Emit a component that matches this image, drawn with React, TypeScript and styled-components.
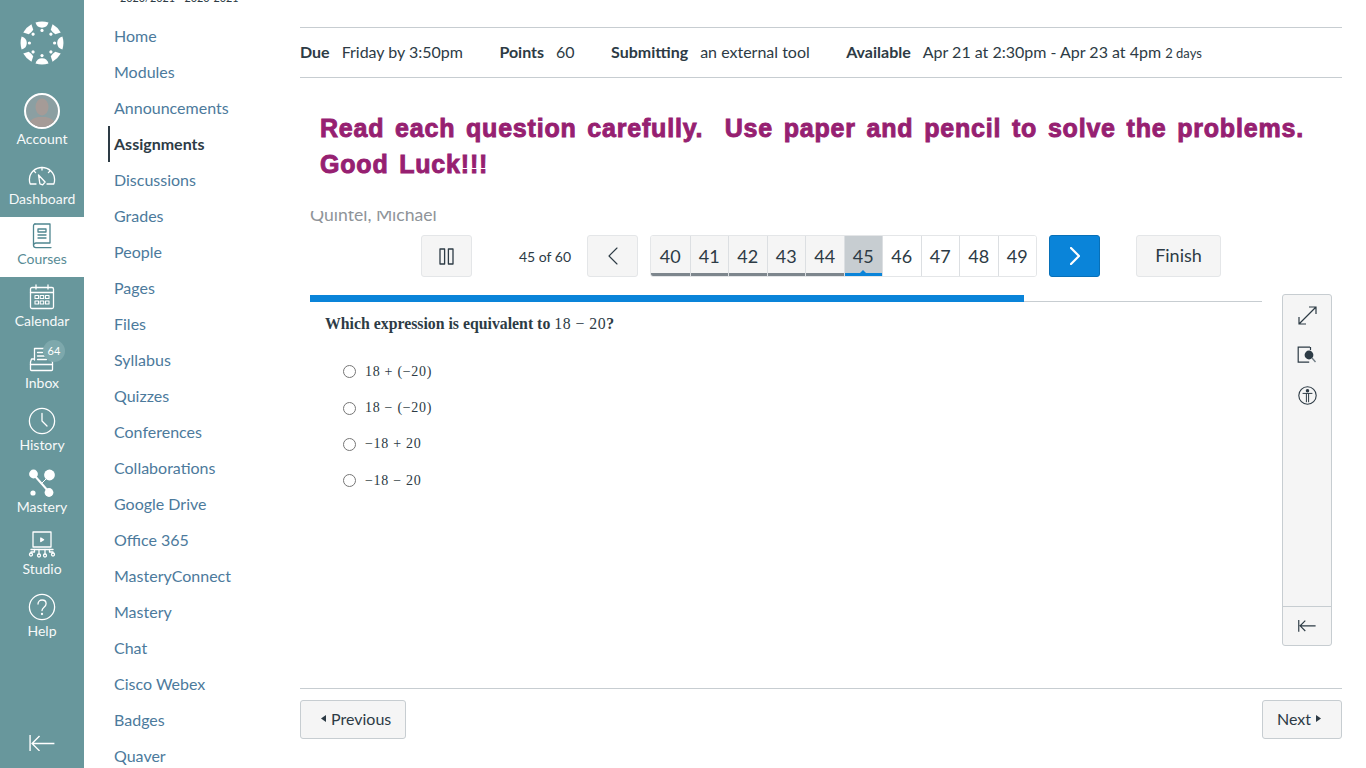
import React from 'react'
import styled, { createGlobalStyle } from 'styled-components'

const GlobalStyle = createGlobalStyle`
  html, body {
    margin: 0;
    height: 100%;
    overflow: hidden;
    background: #fff;
    font-family: Lato, "Liberation Sans", sans-serif;
    color: #2d3b45;
  }
  * {
    box-sizing: border-box;
  }
`

const Page = styled.div`
  display: flex;
  width: 1366px;
  height: 768px;
  overflow: hidden;
`

/* global nav */
const GlobalNav = styled.nav`
  flex: 0 0 84px;
  height: 768px;
  display: flex;
  flex-direction: column;
  background: #68979c;
  color: #fff;
`

const LogoBox = styled.div`
  height: 79px;
  padding-top: 21px;
  display: flex;
  justify-content: center;
  align-items: flex-start;
`

const NavItem = styled.a<{ $active?: boolean; $tall?: boolean }>`
  position: relative;
  height: ${p => (p.$tall ? '62px' : '60px')};
  padding: 5px 0 8px;
  display: flex;
  flex-direction: column;
  align-items: center;
  background: ${p => (p.$active ? '#fff' : 'transparent')};
  color: ${p => (p.$active ? '#4f8690' : '#fff')};
`

const AccountItem = styled(NavItem)`
  height: 78px;
  padding-top: 13px;
`

const NavIcon = styled.div`
  height: 27px;
  flex: 1;
  display: flex;
  align-items: center;
  justify-content: center;
`

const NavLabel = styled.span`
  height: 20px;
  line-height: 20px;
  font-size: 14px;
  color: inherit;
  opacity: 0.95;
`

const Avatar = styled.div`
  width: 36px;
  height: 36px;
  border-radius: 50%;
  border: 2px solid #fff;
  background: #8b9fa2;
  overflow: hidden;
  display: flex;
`

const Badge = styled.span`
  position: absolute;
  top: 1px;
  left: 43px;
  width: 22px;
  height: 22px;
  border-radius: 50%;
  background: #7da8ac;
  font-size: 11px;
  line-height: 22px;
  text-align: center;
  color: #fff;
`

const CollapseBox = styled.div`
  margin-top: auto;
  height: 50px;
  display: flex;
  align-items: center;
  justify-content: center;
`

/* course nav */
const CourseNav = styled.nav`
  flex: 0 0 216px;
  height: 768px;
  overflow: hidden;
`

const Crumb = styled.div`
  height: 4px;
  padding-left: 36px;
  display: flex;
  align-items: flex-end;
  font-size: 10.8px;
  line-height: 12px;
  color: #2d3b45;
  overflow: hidden;
  white-space: nowrap;
`

const CourseList = styled.ul`
  list-style: none;
  margin: 14px 0 0 24px;
  padding: 0;
`

const CourseLink = styled.li<{ $active?: boolean }>`
  height: 36px;
  line-height: 36px;
  font-size: 16px;
  padding-left: 4px;
  border-left: 2px solid ${p => (p.$active ? '#2d3b45' : 'transparent')};
  font-weight: ${p => (p.$active ? 700 : 400)};
  color: ${p => (p.$active ? '#2d3b45' : '#4c7a9c')};
`

/* main column */
const Main = styled.main`
  flex: 1;
  padding-right: 24px;
  min-width: 0;
`

const TopRule = styled.div`
  height: 28px;
  border-bottom: 1px solid #c7cdd1;
`

const Details = styled.div`
  height: 50px;
  padding-bottom: 2px;
  display: flex;
  align-items: center;
  border-bottom: 1px solid #c7cdd1;
  font-size: 16px;
  white-space: nowrap;
`

const DetailGroup = styled.div`
  margin-right: 36.4px;
`

const DetailLabel = styled.strong`
  margin-right: 12px;
  font-weight: 700;
`

const SmallText = styled.small`
  font-size: 13px;
`

const Banner = styled.h2`
  margin: 32px 0 0;
  padding: 0 0 0 20px;
  font-family: "Liberation Sans", Arial, sans-serif;
  font-size: 25px;
  font-weight: 700;
  line-height: 36px;
  letter-spacing: 0.8px;
  word-spacing: 3px;
  white-space: pre-wrap;
  color: #962071;
  -webkit-text-stroke: 0.9px #962071;
`

const Quiz = styled.section`
  margin-left: 10px;
`

const StudentName = styled.div`
  height: 12px;
  margin-top: 29px;
  overflow: hidden;
  display: flex;
  align-items: flex-end;
  font-size: 17.6px;
  line-height: 16px;
  color: #8f9499;
`

const QuizBar = styled.div`
  margin-top: 12px;
  padding-left: 111px;
  display: flex;
  align-items: center;
`

const BarButton = styled.button<{ $primary?: boolean }>`
  height: 42px;
  width: 51px;
  padding: 0;
  display: flex;
  align-items: center;
  justify-content: center;
  border-radius: 3px;
  border: 1px solid ${p => (p.$primary ? '#0770b8' : '#e4e6e8')};
  background: ${p => (p.$primary ? '#0a84d9' : '#f5f5f5')};
  color: ${p => (p.$primary ? '#fff' : '#2d3b45')};
  font-family: inherit;
`

const FinishButton = styled(BarButton)`
  width: 85px;
  margin-left: 36px;
  padding-bottom: 2px;
  font-size: 18px;
`

const Count = styled.span`
  width: 52px;
  margin: 0 16px 0 47px;
  font-size: 14px;
  white-space: nowrap;
`

const Pager = styled.div`
  width: 387px;
  height: 42px;
  margin: 0 12px;
  display: grid;
  grid-template-columns: repeat(10, 1fr);
  border: 1px solid #e4e6e8;
  border-radius: 3px;
  overflow: hidden;
`

const PageCell = styled.div<{ $state: 'seen' | 'current' | 'todo' }>`
  position: relative;
  display: flex;
  align-items: center;
  justify-content: center;
  font-size: 18px;
  border-left: 1px solid #dcdfe2;
  background: ${p =>
    p.$state === 'current' ? '#c7cdd1' : p.$state === 'seen' ? '#f5f5f5' : '#fff'};
  box-shadow: ${p =>
    p.$state === 'current'
      ? 'inset 0 -3px 0 #0a84d9'
      : p.$state === 'seen'
        ? 'inset 0 -3px 0 #7d868d'
        : 'none'};

  &:first-child {
    border-left: none;
  }
`

const CurrentNotch = styled.span`
  position: absolute;
  left: 50%;
  bottom: 2px;
  margin-left: -4px;
  border-left: 4px solid transparent;
  border-right: 4px solid transparent;
  border-bottom: 4px solid #0a84d9;
`

const QuizBody = styled.div`
  margin-top: 17px;
  display: flex;
  gap: 20px;
  height: 352px;
`

const QuestionColumn = styled.div`
  flex: 0 0 952px;
`

const Progress = styled.div`
  height: 7px;
  margin-top: 1px;
  border-bottom: 1px solid #c7cdd1;
`

const ProgressFill = styled.div`
  height: 7px;
  background: #0a84d9;
`

const Question = styled.p`
  margin: 12px 0 0 15px;
  font-family: "Liberation Serif", "Times New Roman", serif;
  font-size: 15.8px;
  line-height: 20px;
  font-weight: 700;
  color: #2d3b45;
`

const MathText = styled.span`
  font-weight: 400;
  letter-spacing: 0.5px;
`

const Options = styled.div`
  margin: 19.6px 0 0 33px;
  display: flex;
  flex-direction: column;
`

const Option = styled.label`
  height: 36.3px;
  display: flex;
  align-items: center;
  gap: 9px;
  font-family: "Liberation Serif", "Times New Roman", serif;
  font-size: 14px;
  letter-spacing: 0.7px;

  input {
    margin: 0;
    width: 13px;
    height: 13px;
  }
`

const ToolPanel = styled.aside`
  flex: 0 0 50px;
  display: flex;
  flex-direction: column;
  background: #f5f5f5;
  border: 1px solid #c7cdd1;
  border-radius: 3px;
`

const Tool = styled.div`
  height: 40px;
  display: flex;
  align-items: center;
  justify-content: center;
`

const CollapseTool = styled(Tool)`
  margin-top: auto;
  height: 39px;
  border-top: 1px solid #c7cdd1;
`

const Footer = styled.footer`
  margin-top: 42px;
  padding-top: 11px;
  border-top: 1px solid #c7cdd1;
  display: flex;
  justify-content: space-between;
`

const FooterButton = styled.button<{ $caretLeft?: boolean }>`
  height: 39px;
  padding: ${p => (p.$caretLeft ? '0 14px 2px 20px' : '0 20px 2px 14px')};
  display: flex;
  align-items: center;
  gap: 5px;
  background: #f5f5f5;
  border: 1px solid #c7cdd1;
  border-radius: 3px;
  color: #2d3b45;
  font-family: inherit;
  font-size: 16px;
`

/* icons */
const CanvasLogo = () => {
  const angles = [0, 45, 90, 135, 180, 225, 270, 315]
  return (
    <svg width="44" height="44" viewBox="-22 -22 44 44" fill="#fff">
      {angles.map(a => (
        <g key={a} transform={`rotate(${a})`}>
          <path
            d={
              a % 90 === 0
                ? 'M-6.5 -20.4A21.5 21.5 0 0 1 6.5 -20.4Q5 -15.2 0 -15.2Q-5 -15.2 -6.5 -20.4Z'
                : 'M-5.8 -20.7A21.5 21.5 0 0 1 5.8 -20.7L3.2 -15.6Q0 -14.8 -3.2 -15.6Z'
            }
          />
          <circle cx="0" cy="-12.6" r="1.6" />
        </g>
      ))}
    </svg>
  )
}

const Stroke = styled.svg<{ $w?: number; $square?: boolean }>`
  fill: none;
  stroke: currentColor;
  stroke-width: ${p => p.$w ?? 1.3};
  stroke-linecap: ${p => (p.$square ? 'butt' : 'round')};
  stroke-linejoin: ${p => (p.$square ? 'miter' : 'round')};
`

const AvatarFigure = () => (
  <svg width="32" height="32" viewBox="0 0 32 32" fill="#a59b97">
    <ellipse cx="16" cy="12" rx="6.5" ry="8.5" />
    <path d="M2 32c0-7 6-9 10-10h8c4 1 10 3 10 10z" />
  </svg>
)

const DashboardIcon = () => (
  <Stroke width="28" height="20" viewBox="0 0 28 20">
    <path d="M8 18H2.2C1.6 16.6 1.4 15.2 1.4 13.8C1.4 6.9 7 1.5 14 1.5s12.6 5.4 12.6 12.3c0 1.4-.2 2.8-.8 4.2H19" />
    <path d="M14 1.5v2.5M6 5l1.6 1.6M22 5l-1.6 1.6" />
    <path d="M10.5 9l6.6 7-2.4 2.8-2.8-.9z" />
  </Stroke>
)

const CoursesIcon = () => (
  <Stroke width="20" height="26" viewBox="0 0 20 26">
    <path d="M3 1h15v19H4c-1.6 0-2.5.9-2.5 2.2S2.4 24.6 4 24.6h15" />
    <path d="M1.5 22V3c0-1.2.6-2 1.5-2" />
    <path d="M6 6h8v3H6zM6 12h8M6 15h8" />
  </Stroke>
)

const CalendarIcon = () => (
  <Stroke width="26" height="26" viewBox="0 0 26 26">
    <rect x="1.5" y="3.5" width="23" height="21" rx="1.5" />
    <path d="M1.5 8.5h23M7 1v4M19 1v4" />
    <path
      d="M6 11.5h3.5v3H6zM11.2 11.5h3.5v3h-3.5zM16.5 11.5H20v3h-3.5zM6 17h3.5v3H6zM11.2 17h3.5v3h-3.5zM16.5 17H20v3h-3.5z"
      strokeWidth="1.1"
    />
  </Stroke>
)

const InboxIcon = () => (
  <Stroke width="26" height="26" viewBox="0 0 26 26">
    <path d="M5.5 14V2.5h11" />
    <path d="M8.5 6.5h5M8.5 10h7M8.5 13.5h9" />
    <path d="M5 13H2.5L1.5 16v7.5c0 .6.4 1 1 1h20c.6 0 1-.4 1-1V16l-1-2" />
    <path d="M1.5 18.5h22" />
  </Stroke>
)

const ClockIcon = () => (
  <Stroke width="28" height="28" viewBox="0 0 28 28">
    <circle cx="14" cy="14" r="12.6" />
    <path d="M14 6.5V14l5 5" />
  </Stroke>
)

const MasteryIcon = () => (
  <svg width="28" height="28" viewBox="0 0 28 28" fill="#fff">
    <path d="M6 6l15 17" stroke="#fff" strokeWidth="2" />
    <path d="M20 8L13 15" stroke="#fff" strokeWidth="1" />
    <circle cx="5.5" cy="5" r="4.4" />
    <circle cx="21.5" cy="6" r="5.4" />
    <circle cx="21" cy="23.5" r="4.4" />
    <circle cx="5" cy="24" r="2.6" />
  </svg>
)

const StudioIcon = () => (
  <Stroke width="28" height="27" viewBox="0 0 28 27">
    <path d="M5 1h18v15H5z" />
    <path d="M12.8 7v3.5l2.8-1.7z" fill="currentColor" />
    <path d="M3 18.5h22" />
    <path d="M6.5 18.5v2.5H3v1M11 18.5V23M17 18.5V23M21.5 18.5v2.5H25v1" />
    <circle cx="3" cy="23.5" r="1.5" />
    <circle cx="11" cy="24.5" r="1.5" />
    <circle cx="17" cy="24.5" r="1.5" />
    <circle cx="25" cy="23.5" r="1.5" />
  </Stroke>
)

const HelpIcon = () => (
  <Stroke width="28" height="28" viewBox="0 0 28 28">
    <circle cx="14" cy="14" r="12.6" />
    <path d="M10 11c0-2.4 1.8-4 4.1-4s4 1.6 4 3.7c0 3.5-4.1 3.4-4.1 6.8" />
    <circle cx="14" cy="21" r="0.5" />
  </Stroke>
)

const CollapseArrow = ({ size, weight }: { size: number; weight: number }) => (
  <Stroke $w={weight} $square width={size} height={size * 0.65} viewBox="0 0 26 17">
    <path d="M1 0v17M25.5 8.5H3M10.5 1L3 8.5l7.5 7.5" />
  </Stroke>
)

const PauseIcon = () => (
  <Stroke $w={1.3} width="15" height="17" viewBox="0 0 15 17">
    <rect x="1" y="1" width="4.6" height="15" />
    <rect x="9.4" y="1" width="4.6" height="15" />
  </Stroke>
)

const Chevron = ({ left, weight }: { left?: boolean; weight: number }) => (
  <Stroke $w={weight} width="10" height="18" viewBox="0 0 10 18">
    <path d={left ? 'M9 1L1 9l8 8' : 'M1 1l8 8-8 8'} />
  </Stroke>
)

const ExpandIcon = () => (
  <Stroke $w={1.2} $square width="19" height="19" viewBox="0 0 19 19">
    <path d="M1 18L18 1M11 1h7v7M1 11v7h7" />
  </Stroke>
)

const LookupIcon = () => (
  <svg width="20" height="18" viewBox="0 0 20 18">
    <path d="M13 1.2H1.2v15h11" fill="none" stroke="#2d3b45" strokeWidth="1.2" />
    <path d="M13.5 1v3" stroke="#2d3b45" strokeWidth="1.2" />
    <circle cx="12" cy="9" r="4.4" fill="#2d3b45" />
    <path d="M15 12l3.5 4" stroke="#6f7b84" strokeWidth="1.4" />
  </svg>
)

const AccessIcon = () => (
  <Stroke $w={1.1} width="19" height="19" viewBox="0 0 19 19">
    <circle cx="9.5" cy="9.5" r="8.7" />
    <circle cx="9.5" cy="4.8" r="1.2" fill="currentColor" />
    <path d="M5 7.4h9" strokeWidth="1" />
    <path d="M8.4 7.6v8.2M10.6 7.6v8.2" strokeWidth="1" />
  </Stroke>
)

const Caret = ({ left }: { left?: boolean }) => (
  <svg width="5" height="7" viewBox="0 0 5 7" fill="currentColor">
    <path d={left ? 'M5 0v7L0 3.5z' : 'M0 0v7l5-3.5z'} />
  </svg>
)

const courseLinks = [
  'Home', 'Modules', 'Announcements', 'Assignments', 'Discussions', 'Grades', 'People',
  'Pages', 'Files', 'Syllabus', 'Quizzes', 'Conferences', 'Collaborations', 'Google Drive',
  'Office 365', 'MasteryConnect', 'Mastery', 'Chat', 'Cisco Webex', 'Badges', 'Quaver',
]

const pages = [40, 41, 42, 43, 44, 45, 46, 47, 48, 49]
const answers = ['18 + (−20)', '18 − (−20)', '−18 + 20', '−18 − 20']
const answeredPercent = (45 / 60) * 100

const App = () => (
  <Page>
    <GlobalStyle />
    <GlobalNav>
      <LogoBox>
        <CanvasLogo />
      </LogoBox>
      <AccountItem>
        <NavIcon>
          <Avatar><AvatarFigure /></Avatar>
        </NavIcon>
        <NavLabel>Account</NavLabel>
      </AccountItem>
      <NavItem>
        <NavIcon><DashboardIcon /></NavIcon>
        <NavLabel>Dashboard</NavLabel>
      </NavItem>
      <NavItem $active>
        <NavIcon><CoursesIcon /></NavIcon>
        <NavLabel>Courses</NavLabel>
      </NavItem>
      <NavItem $tall>
        <NavIcon><CalendarIcon /></NavIcon>
        <NavLabel>Calendar</NavLabel>
      </NavItem>
      <NavItem $tall>
        <NavIcon><InboxIcon /></NavIcon>
        <Badge>64</Badge>
        <NavLabel>Inbox</NavLabel>
      </NavItem>
      <NavItem $tall>
        <NavIcon><ClockIcon /></NavIcon>
        <NavLabel>History</NavLabel>
      </NavItem>
      <NavItem $tall>
        <NavIcon><MasteryIcon /></NavIcon>
        <NavLabel>Mastery</NavLabel>
      </NavItem>
      <NavItem $tall>
        <NavIcon><StudioIcon /></NavIcon>
        <NavLabel>Studio</NavLabel>
      </NavItem>
      <NavItem $tall>
        <NavIcon><HelpIcon /></NavIcon>
        <NavLabel>Help</NavLabel>
      </NavItem>
      <CollapseBox>
        <CollapseArrow size={26} weight={1.4} />
      </CollapseBox>
    </GlobalNav>

    <CourseNav>
      <Crumb>2020/2021 - 2020-2021</Crumb>
      <CourseList>
        {courseLinks.map(name => (
          <CourseLink key={name} $active={name === 'Assignments'}>
            {name}
          </CourseLink>
        ))}
      </CourseList>
    </CourseNav>

    <Main>
      <TopRule />
      <Details>
        <DetailGroup><DetailLabel>Due</DetailLabel>Friday by 3:50pm</DetailGroup>
        <DetailGroup><DetailLabel>Points</DetailLabel>60</DetailGroup>
        <DetailGroup><DetailLabel>Submitting</DetailLabel>an external tool</DetailGroup>
        <DetailGroup>
          <DetailLabel>Available</DetailLabel>Apr 21 at 2:30pm - Apr 23 at 4pm <SmallText>2 days</SmallText>
        </DetailGroup>
      </Details>
      <Banner>
        {'Read each question carefully.  Use paper and pencil to solve the problems.\nGood Luck!!!'}
      </Banner>
      <Quiz>
        <StudentName>Quintel, Michael</StudentName>
        <QuizBar>
          <BarButton aria-label="Pause"><PauseIcon /></BarButton>
          <Count>45 of 60</Count>
          <BarButton aria-label="Previous question"><Chevron left weight={1.1} /></BarButton>
          <Pager>
            {pages.map(n => (
              <PageCell key={n} $state={n < 45 ? 'seen' : n === 45 ? 'current' : 'todo'}>
                {n}
                {n === 45 && <CurrentNotch />}
              </PageCell>
            ))}
          </Pager>
          <BarButton $primary aria-label="Next question"><Chevron weight={2.2} /></BarButton>
          <FinishButton>Finish</FinishButton>
        </QuizBar>
        <QuizBody>
          <QuestionColumn>
            <Progress>
              <ProgressFill style={{ width: `${answeredPercent}%` }} />
            </Progress>
            <Question>
              Which expression is equivalent to <MathText>18 − 20</MathText>?
            </Question>
            <Options>
              {answers.map(a => (
                <Option key={a}>
                  <input type="radio" name="answer" />
                  {a}
                </Option>
              ))}
            </Options>
          </QuestionColumn>
          <ToolPanel>
            <Tool><ExpandIcon /></Tool>
            <Tool><LookupIcon /></Tool>
            <Tool><AccessIcon /></Tool>
            <CollapseTool><CollapseArrow size={18} weight={1.7} /></CollapseTool>
          </ToolPanel>
        </QuizBody>
      </Quiz>
      <Footer>
        <FooterButton $caretLeft><Caret left /> Previous</FooterButton>
        <FooterButton>Next <Caret /></FooterButton>
      </Footer>
    </Main>
  </Page>
)

export default App
